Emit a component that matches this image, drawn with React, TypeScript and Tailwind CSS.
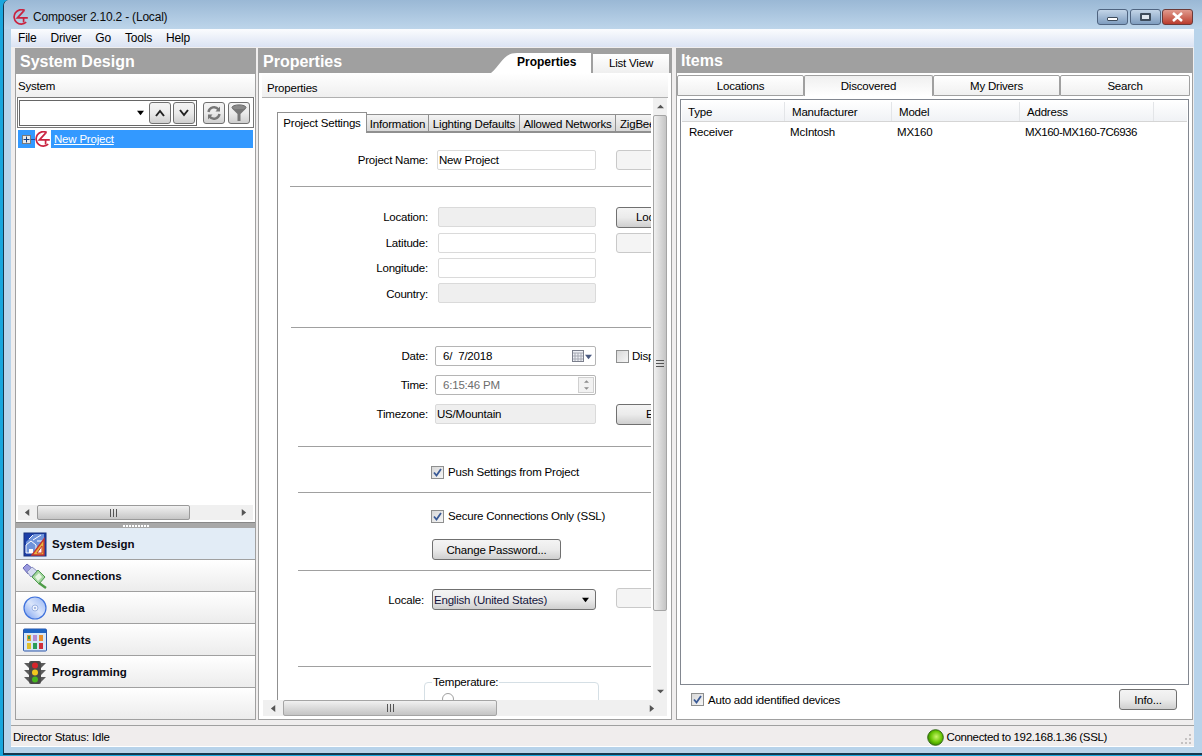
import React from "react";

const Logo = ({ s = 16 }: { s?: number }) => (
  <svg width={s} height={s} viewBox="0 0 16 16" fill="none" stroke="#c9233f" strokeWidth="1.7">
    <path d="M11.8 1.6 A7.2 7.2 0 1 0 13.2 13.2" />
    <path d="M10.6 2.2 L4.4 8.8 H14.8 M10.6 2.2 V3 M10.6 8.8 V13.6" />
  </svg>
);

const SysIcon = () => (
  <svg width="24" height="26" viewBox="0 0 24 26">
    <rect x="1" y="2" width="22" height="23" fill="#1c3fa8" stroke="#17307c" />
    <path d="M3 11 L11 3 H21 V8 L10 22 H3 Z" fill="#6f93da" />
    <path d="M3 14 L8 10 L13 14 V22 H3 Z" fill="none" stroke="#fff" />
    <path d="M6 18 H10 V22 H6 Z" fill="#fff" />
    <path d="M6 8 L10 4 M10 9 L18 4 M14 10 H20" stroke="#fff" />
    <path d="M21 8 V24 H9 Z" fill="#e9b23e" stroke="#c6352d" strokeWidth="1.4" />
    <path d="M19 15 V22 H14 Z" fill="#fff" stroke="#c6352d" />
  </svg>
);
const ConnIcon = () => (
  <svg width="26" height="26" viewBox="0 0 26 26">
    <path d="M1 5 L5 1 L11 6 L6 11 Z" fill="#9a9adf" stroke="#6767b4" />
    <path d="M5 9 L10 4 L15 8 L9 14 Z" fill="#d6dcf2" stroke="#8d92bf" />
    <path d="M10 14 L16 7 L23 14 L17 21 Z" fill="#a5d6a0" stroke="#4d9a4f" />
    <path d="M13 14 L17 10 L20 14 L16 18 Z" fill="#e7f5e4" />
    <path d="M17 20 L24 25" stroke="#4e9c48" strokeWidth="2.4" fill="none" />
  </svg>
);
const CdIcon = () => (
  <svg width="24" height="24" viewBox="0 0 24 24">
    <defs>
      <linearGradient id="cd" x1="0" y1="1" x2="1" y2="0">
        <stop offset="0" stopColor="#6f98f0" />
        <stop offset="0.5" stopColor="#dbe6fb" />
        <stop offset="1" stopColor="#93b3f3" />
      </linearGradient>
    </defs>
    <circle cx="12" cy="12" r="11" fill="url(#cd)" stroke="#3f72dc" strokeWidth="1.2" />
    <circle cx="12" cy="12" r="3" fill="#eef3fd" stroke="#9db4e2" />
    <circle cx="12" cy="12" r="1" fill="#8fa6d8" />
  </svg>
);
const AgentsIcon = () => (
  <svg width="24" height="24" viewBox="0 0 24 24">
    <rect x="0.5" y="1" width="23" height="22" rx="1" fill="#d7e6f7" stroke="#2a55a8" />
    <rect x="1" y="1" width="22" height="4" fill="#1f63c2" />
    <rect x="4" y="7" width="4" height="6" fill="#e3a12f" />
    <rect x="5" y="8" width="2" height="3" fill="#3d9c4a" />
    <rect x="10" y="7" width="4" height="6" fill="#b78ad0" />
    <rect x="16" y="7" width="4" height="6" fill="#e8902e" />
    <rect x="4" y="15" width="4" height="6" fill="#e0c02e" />
    <rect x="10" y="15" width="4" height="6" fill="#2b9b58" />
    <rect x="16" y="15" width="4" height="6" fill="#cf2e3b" />
  </svg>
);
const LightIcon = () => (
  <svg width="24" height="24" viewBox="0 0 24 24">
    <path d="M1 3 H6 V8 Z M23 3 H18 V8 Z M1 10 H6 V15 Z M23 10 H18 V15 Z M1 17 H6 V22 Z M23 17 H18 V22 Z" fill="#5c5c5c" />
    <rect x="6" y="1" width="12" height="23" rx="2" fill="#4a4a4a" />
    <circle cx="12" cy="5.5" r="3" fill="#d6262c" />
    <circle cx="12" cy="12.5" r="3" fill="#f3c71f" />
    <circle cx="12" cy="19.5" r="3" fill="#46b51f" />
  </svg>
);

const Grip = () => (
  <svg width="7" height="8" viewBox="0 0 7 8" stroke="#555">
    <path d="M0.5 0V8M3.5 0V8M6.5 0V8" />
  </svg>
);

const btn = "rounded-[3px] border border-[#707070] bg-gradient-to-b from-[#f4f4f4] via-[#ebebeb] to-[#cfcfcf] text-black";

const Sep = ({ mt, ml }: { mt: string; ml: string }) => (
  <div className={`h-px w-[420px] shrink-0 bg-[#a0a0a0] ${mt} ${ml}`} />
);

const DisabledBtn = () => (
  <div className="ml-5 h-5 w-[60px] shrink-0 rounded-[3px] border border-[#c9c9c9] bg-[#f4f4f4]" />
);

const Field = ({ children, gray, w = "w-[158px]" }: { children?: React.ReactNode; gray?: boolean; w?: string }) => (
  <div className={`flex h-5 shrink-0 items-center rounded-[2px] border border-[#dadada] px-[1px] ${w} ${gray ? "bg-[#efefef]" : "bg-white"}`}>
    {children}
  </div>
);

const Label = ({ children }: { children: React.ReactNode }) => (
  <div className="w-[150px] shrink-0 text-right">{children}</div>
);

const Check = ({ className = "" }: { className?: string }) => (
  <div className={`flex h-[13px] w-[13px] shrink-0 items-center justify-center border border-[#8e8f8f] bg-gradient-to-br from-[#d8d8d8] to-[#f6f6f6] ${className}`}>
    <svg width="11" height="11" viewBox="0 0 11 11" fill="none" stroke="#3a5a96" strokeWidth="1.8">
      <path d="M2 5.5 L4.5 8.5 L9 2" />
    </svg>
  </div>
);

const Arrow = ({ d, cls = "fill-[#555]", w = 7, h = 7 }: { d: string; cls?: string; w?: number; h?: number }) => (
  <svg width={w} height={h} viewBox="0 0 8 8" className={cls}>
    <path d={d} />
  </svg>
);

const nav = [
  { name: "System Design", icon: <SysIcon />, active: true },
  { name: "Connections", icon: <ConnIcon /> },
  { name: "Media", icon: <CdIcon /> },
  { name: "Agents", icon: <AgentsIcon /> },
  { name: "Programming", icon: <LightIcon /> },
];

const topTabs = [
  { name: "Project Settings", active: true, w: "w-[90px] justify-center" },
  { name: "Information", w: "w-[63px] justify-center" },
  { name: "Lighting Defaults", w: "w-[92px] justify-center" },
  { name: "Allowed Networks", w: "w-[97px] justify-center" },
  { name: "ZigBee", w: "w-[60px] justify-start pl-[4px]" },
];

const columns = [
  { name: "Type", w: "w-[103px]", pl: "pl-[6px]" },
  { name: "Manufacturer", w: "w-[107px]", pl: "pl-[7px]" },
  { name: "Model", w: "w-[128px]", pl: "pl-[7px]" },
  { name: "Address", w: "w-[134px]", pl: "pl-[7px]" },
];

const itemTabs = [
  { name: "Locations", w: "w-[127px]" },
  { name: "Discovered", w: "w-[129px]", active: true },
  { name: "My Drivers", w: "w-[127px]" },
  { name: "Search", w: "w-[130px]" },
];

export default function App() {
  return (
    <div className="h-[756px] w-[1202px] overflow-hidden bg-[#19a6dd] pl-[3px] text-[11.5px] leading-[14px] tracking-[-0.2px] text-black [font-family:'Liberation_Sans',Arial,sans-serif]">
      <div className="flex h-[755px] flex-col rounded-tl-[6px] border-b-2 border-l border-[#16384f] bg-[#b8d3ea]">
        {/* Title bar */}
        <div className="flex h-[29px] shrink-0 items-start justify-between rounded-tl-[6px] bg-gradient-to-b from-[#9ab8d5] to-[#bdd5ea] pl-[9px] pr-[9px]">
          <div className="mt-[9px] flex items-center gap-[4px]">
            <Logo />
            <span className="text-[12px] text-[#0c0c0c]">Composer 2.10.2 - (Local)</span>
          </div>
          <div className="mt-[9px] flex">
            <div className="flex h-4 w-[31px] items-center justify-center rounded-[3px] border border-[#4f6480] bg-gradient-to-b from-[#c3d5e8] to-[#7f9dbf]">
              <div className="mt-[4px] h-[4px] w-[11px] rounded-[1px] border border-[#3e4c5c] bg-white" />
            </div>
            <div className="ml-[2px] flex h-4 w-[31px] items-center justify-center rounded-[3px] border border-[#4f6480] bg-gradient-to-b from-[#c3d5e8] to-[#7f9dbf]">
              <div className="h-[8px] w-[11px] rounded-[1px] border-2 border-[#3e4c5c] bg-[#dfe7f0]" />
            </div>
            <div className="ml-px flex h-4 w-[31px] items-center justify-center rounded-[3px] border border-[#6b3a38] bg-gradient-to-b from-[#e09a8e] to-[#b93a2c]">
              <svg width="13" height="10" viewBox="0 0 13 10" stroke="#fff" strokeWidth="2.6">
                <path d="M2 1 L11 9 M11 1 L2 9" />
              </svg>
            </div>
          </div>
        </div>

        {/* Client */}
        <div className="ml-[7px] mr-[8px] flex flex-1 flex-col bg-white">
          <div className="flex h-[18px] shrink-0 items-center gap-[14px] bg-gradient-to-b from-[#fbfcfe] to-[#dbe3f3] pl-[7px] text-[12px]">
            <span>File</span>
            <span>Driver</span>
            <span>Go</span>
            <span>Tools</span>
            <span>Help</span>
          </div>

          <div className="flex h-[678px] shrink-0 bg-[#f0eeee] pl-[4px] pt-px">
            {/* Left */}
            <div className="flex h-[672px] w-[241px] shrink-0 flex-col border-x border-b border-[#a0a0a0] bg-white">
              <div className="flex h-[26px] shrink-0 items-center bg-[#a0a0a0] pl-1 pt-[2px] text-[16px] font-bold tracking-normal text-white">System Design</div>
              <div className="flex h-[23px] shrink-0 items-center bg-gradient-to-b from-white to-[#efefef] pl-[2px]">System</div>

              <div className="mx-px flex h-[31px] shrink-0 items-center border border-[#777] bg-white pl-[1px]">
                <div className="flex h-[26px] w-[178px] items-center border border-[#666]">
                  <div className="flex flex-1 justify-end pr-[5px]">
                    <Arrow d="M0 2 H8 L4 7 Z" cls="fill-black" />
                  </div>
                  <div className={`flex h-[22px] w-[22px] items-center justify-center ${btn}`}>
                    <svg width="12" height="8" viewBox="0 0 12 8" fill="none" stroke="#222" strokeWidth="2"><path d="M2 7 L6 2 L10 7" /></svg>
                  </div>
                  <div className={`ml-[2px] mr-[1px] flex h-[22px] w-[22px] items-center justify-center ${btn}`}>
                    <svg width="12" height="8" viewBox="0 0 12 8" fill="none" stroke="#222" strokeWidth="2"><path d="M2 1 L6 6 L10 1" /></svg>
                  </div>
                </div>
                <div className={`ml-[6px] flex h-[22px] w-[22px] items-center justify-center ${btn}`}>
                  <svg width="16" height="16" viewBox="0 0 16 16" fill="none" stroke="#777" strokeWidth="2.4">
                    <path d="M2.5 7 A5.6 5.6 0 0 1 12.5 4.5 M13.5 9 A5.6 5.6 0 0 1 3.5 11.5" />
                    <path d="M14 1.5 V6.5 H9.5 Z M2 14.5 V9.5 H6.5 Z" fill="#777" stroke="none" />
                  </svg>
                </div>
                <div className={`ml-[3px] flex h-[22px] w-[22px] items-center justify-center ${btn}`}>
                  <svg width="16" height="18" viewBox="0 0 16 18">
                    <ellipse cx="8" cy="3.5" rx="7" ry="2.6" fill="#8a8a8a" stroke="#666" />
                    <path d="M1.5 5 L6.5 10 V17 H9.5 V10 L14.5 5 Z" fill="#777" />
                  </svg>
                </div>
              </div>

              <div className="mx-[2px] mt-[2px] flex h-[18px] shrink-0 items-center bg-[#3399ff] pl-1">
                <div className="flex h-[9px] w-[9px] items-center justify-center border border-[#7a7a7a] bg-[#e8e8e8]">
                  <svg width="7" height="7" viewBox="0 0 7 7" stroke="#123a7a"><path d="M0.5 3.5 H6.5 M3.5 0.5 V6.5" /></svg>
                </div>
                <div className="h-px w-[4px] bg-[#1d4fa0]" />
                <div className="flex h-[18px] w-4 items-center justify-center bg-white"><Logo s={16} /></div>
                <span className="ml-[3px] text-white underline">New Project</span>
              </div>

              <div className="flex-1" />

              <div className="mx-[2px] mb-[2px] flex h-[15px] shrink-0 items-center bg-[#f0f0f0]">
                <div className="flex w-[19px] justify-center"><Arrow d="M6 0 V8 L1 4 Z" /></div>
                <div className="flex h-[15px] w-[153px] items-center justify-center rounded-[2px] border border-[#9a9a9a] bg-gradient-to-b from-[#f1f1f1] to-[#c6c6c6]"><Grip /></div>
                <div className="flex flex-1 justify-end pr-[6px]"><Arrow d="M2 0 V8 L7 4 Z" /></div>
              </div>

              <div className="flex h-[6px] shrink-0 items-center justify-center border-t border-[#888] bg-[#a8a8a8]">
                <div className="flex gap-px">
                  {Array.from({ length: 9 }).map((_, i) => (
                    <div key={i} className="h-[2px] w-[2px] bg-white" />
                  ))}
                </div>
              </div>

              {nav.map((n) => (
                <div
                  key={n.name}
                  className={`flex h-8 shrink-0 items-center border-b border-[#a0a0a0] pl-[6px] font-bold ${n.active ? "bg-[#e2ecf6]" : "bg-gradient-to-b from-white to-[#ececec]"}`}
                >
                  <div className="flex w-[26px] justify-center">{n.icon}</div>
                  <span className="ml-[4px] text-[11.5px] tracking-normal text-[#0a0a14]">{n.name}</span>
                </div>
              ))}
              <div className="h-[31px] flex-none bg-gradient-to-b from-white to-[#ececec]" />
            </div>

            {/* Center */}
            <div className="ml-[2px] flex h-[672px] w-[414px] shrink-0 flex-col border-x border-b border-[#a0a0a0] bg-white">
              <div className="flex h-[25px] shrink-0 items-end justify-between bg-[#a0a0a0] pl-1 pr-[1px]">
                <span className="mb-[4px] text-[16px] font-bold tracking-normal text-white">Properties</span>
                <div className="flex items-end">
                  <svg width="26" height="20" viewBox="0 0 26 20" className="fill-white"><path d="M0 20 C10 12 12 0 26 0 V20 Z" /></svg>
                  <div className="flex h-5 w-[74px] items-center bg-white pb-[2px] text-[12px] font-bold tracking-normal">Properties</div>
                  <div className="ml-[1px] flex h-5 w-[78px] items-center justify-center rounded-tr-[2px] border border-b-0 border-[#a0a0a0] bg-gradient-to-b from-white to-[#efefef] pb-[2px]">List View</div>
                </div>
              </div>
              <div className="mx-[3px] flex h-[25px] shrink-0 items-center border-b border-[#b0b0b0] bg-gradient-to-b from-white to-[#efefef] pl-[5px] pt-[5px]">Properties</div>

              <div className="flex min-h-0 flex-1 flex-col pb-[3px] pl-1 pr-[4px]">
                <div className="flex min-h-0 flex-1">
                  <div className="min-w-0 flex-1 overflow-hidden bg-white">
                    <div className="flex h-full w-[600px] flex-col pl-[14px] pt-[14px]">
                      <div className="flex h-5 shrink-0 items-end">
                        {topTabs.map((t) => (
                          <div
                            key={t.name}
                            className={`flex shrink-0 items-center border border-[#909090] ${t.w} ${t.active ? "relative z-10 -mb-px h-[21px] border-b-0 bg-white" : "-ml-px h-[18px] overflow-hidden whitespace-nowrap bg-gradient-to-b from-[#f4f4f4] to-[#d8d8d8] pt-px"}`}
                          >
                            {t.name}
                          </div>
                        ))}
                      </div>

                      <div className="flex min-h-0 flex-1 flex-col border-l border-t border-[#909090]">
                        <div className="mt-[17px] flex h-5 shrink-0 items-center">
                          <Label>Project Name:</Label>
                          <div className="ml-[9px]"><Field w="w-[159px]">New Project</Field></div>
                          <DisabledBtn />
                        </div>
                        <Sep mt="mt-[16px]" ml="ml-[12px]" />
                        <div className="mt-[20px] flex h-5 shrink-0 items-center">
                          <Label>Location:</Label>
                          <div className="ml-[10px]"><Field gray /></div>
                          <div className={`ml-5 flex h-[21px] w-[60px] shrink-0 items-center justify-start whitespace-nowrap pl-[19px] ${btn}`}>Loc</div>
                        </div>
                        <div className="mt-[6px] flex h-5 shrink-0 items-center">
                          <Label>Latitude:</Label>
                          <div className="ml-[10px]"><Field /></div>
                          <DisabledBtn />
                        </div>
                        <div className="mt-[5px] flex h-5 shrink-0 items-center">
                          <Label>Longitude:</Label>
                          <div className="ml-[10px]"><Field /></div>
                        </div>
                        <div className="mt-[5px] flex h-5 shrink-0 items-center">
                          <div className="w-[150px] shrink-0 pt-[2px] text-right">Country:</div>
                          <div className="ml-[10px]"><Field gray /></div>
                        </div>
                        <Sep mt="mt-[24px]" ml="ml-[13px]" />
                        <div className="mt-[18px] flex h-5 shrink-0 items-center">
                          <Label>Date:</Label>
                          <div className="ml-[7px] flex h-5 w-[161px] shrink-0 items-center justify-between rounded-[2px] border border-[#b5b5b5] bg-white pl-[7px] pr-[3px]">
                            <span>6/&nbsp; 7/2018</span>
                            <div className="flex items-center gap-px">
                              <svg width="12" height="12" viewBox="0 0 12 12">
                                <rect x="0.5" y="0.5" width="11" height="11" fill="#eef0f5" stroke="#7b7f8c" />
                                <path d="M3 3V11M6 3V11M9 3V11M1 3H11M1 6H11M1 9H11" stroke="#a6a9b3" />
                              </svg>
                              <Arrow d="M0 2 H8 L4 7 Z" cls="fill-[#4a5a80]" />
                            </div>
                          </div>
                          <div className="ml-5 flex shrink-0 items-center gap-[3px]">
                            <div className="h-[13px] w-[13px] border border-[#8e8f8f] bg-gradient-to-br from-[#d8d8d8] to-[#f6f6f6]" />
                            <span>Disp</span>
                          </div>
                        </div>
                        <div className="mt-[9px] flex h-5 shrink-0 items-center">
                          <Label>Time:</Label>
                          <div className="ml-[7px] flex h-5 w-[161px] shrink-0 items-center justify-between rounded-[2px] border border-[#b5b5b5] bg-white pl-[7px] pr-px text-[#6d6d6d]">
                            <span>6:15:46 PM</span>
                            <div className="flex h-4 w-[16px] flex-col items-center justify-around border border-[#d0d0d0] bg-[#f2f2f2]">
                              <Arrow d="M0 6 H8 L4 2 Z" cls="fill-[#8c8c8c]" w={7} h={5} />
                              <Arrow d="M0 2 H8 L4 6 Z" cls="fill-[#8c8c8c]" w={7} h={5} />
                            </div>
                          </div>
                        </div>
                        <div className="mt-[9px] flex h-5 shrink-0 items-center">
                          <Label>Timezone:</Label>
                          <div className="ml-[7px] flex h-5 w-[161px] shrink-0 items-center rounded-[2px] border border-[#dadada] bg-[#efefef] px-[1px]">US/Mountain</div>
                          <div className={`ml-5 flex h-[21px] w-[60px] shrink-0 items-center justify-start pl-[29px] ${btn}`}>E</div>
                        </div>
                        <Sep mt="mt-[22px]" ml="ml-[20px]" />
                        <div className="mt-[18px] flex h-[14px] shrink-0 items-center pl-[153px]">
                          <Check />
                          <span className="ml-[4px]">Push Settings from Project</span>
                        </div>
                        <Sep mt="mt-[13px]" ml="ml-[20px]" />
                        <div className="mt-[16px] flex h-[14px] shrink-0 items-center pl-[153px]">
                          <Check />
                          <span className="ml-[4px]">Secure Connections Only (SSL)</span>
                        </div>
                        <div className="mt-[16px] flex h-[21px] shrink-0 pl-[154px]">
                          <div className={`flex w-[129px] items-center justify-center ${btn}`}>Change Password...</div>
                        </div>
                        <Sep mt="mt-[10px]" ml="ml-[20px]" />
                        <div className="mt-[18px] flex h-[21px] shrink-0 items-center">
                          <div className="w-[146px] shrink-0 text-right">Locale:</div>
                          <div className={`ml-[8px] flex h-[21px] w-[164px] shrink-0 items-center justify-between pl-[1px] pr-[6px] ${btn}`}>
                            <span className="text-[#14143c]">English (United States)</span>
                            <Arrow d="M0 2 H8 L4 7 Z" cls="fill-black" />
                          </div>
                          <div className="-mt-[3px] ml-5 h-5 w-[60px] shrink-0 rounded-[3px] border border-[#c9c9c9] bg-[#f4f4f4]" />
                        </div>
                        <Sep mt="mt-[56px]" ml="ml-[20px]" />
                        <fieldset className="ml-[146px] mt-[8px] h-[60px] w-[175px] shrink-0 rounded-[4px] border border-[#d5dfe5] pl-[7px]">
                          <legend className="px-px">Temperature:</legend>
                          <div className="ml-[10px] mt-[4px] h-3 w-3 rounded-full border border-[#a0a0a0]" />
                        </fieldset>
                      </div>
                    </div>
                  </div>

                  <div className="ml-[2px] flex w-[14px] shrink-0 flex-col items-center bg-[#f0f0f0]">
                    <div className="flex h-[17px] items-center justify-center"><Arrow d="M0 6 H8 L4 2 Z" cls="fill-[#555]" /></div>
                    <div className="flex h-[496px] w-full items-center justify-center rounded-[2px] border border-[#a5a5a5] bg-gradient-to-r from-[#f1f1f1] to-[#c4c4c4]">
                      <svg width="8" height="7" viewBox="0 0 8 7" stroke="#555"><path d="M0 0.5H8M0 3.5H8M0 6.5H8" /></svg>
                    </div>
                    <div className="flex-1" />
                    <div className="flex h-[17px] items-center justify-center"><Arrow d="M0 2 H8 L4 6 Z" cls="fill-[#555]" /></div>
                  </div>
                </div>

                <div className="flex h-4 shrink-0 items-center bg-[#f0f0f0]">
                  <div className="flex w-5 justify-center"><Arrow d="M6 0 V8 L1 4 Z" /></div>
                  <div className="flex h-4 w-[214px] items-center justify-center rounded-[2px] border border-[#a5a5a5] bg-gradient-to-b from-[#f1f1f1] to-[#c4c4c4]"><Grip /></div>
                  <div className="flex-1" />
                  <div className="flex w-[20px] justify-center pr-[3px]"><Arrow d="M2 0 V8 L7 4 Z" /></div>
                  <div className="w-[4px]" />
                </div>
              </div>
            </div>

            {/* Right */}
            <div className="ml-1 flex h-[672px] w-[517px] shrink-0 flex-col border-x border-b border-[#a0a0a0] bg-white">
              <div className="flex h-[25px] shrink-0 items-center bg-[#a0a0a0] pl-1 pt-[1px] text-[16px] font-bold tracking-normal text-white">Items</div>
              <div className="mt-[2px] flex h-[21px] shrink-0">
                {itemTabs.map((t) => (
                  <div
                    key={t.name}
                    className={`flex shrink-0 items-center justify-center rounded-t-[2px] border border-[#a0a0a0] ${t.w} ${t.active ? "border-b-0 bg-gradient-to-b from-[#f0f0f0] to-white" : "bg-gradient-to-b from-white to-[#f0f0f0]"}`}
                  >
                    {t.name}
                  </div>
                ))}
              </div>

              <div className="mx-[3px] mt-[3px] flex h-[586px] shrink-0 flex-col border border-[#828790]">
                <div className="mx-px mt-px flex h-[21px] shrink-0 border-b border-[#d5d5d5] bg-gradient-to-b from-white to-[#f0f2f5] pt-px">
                  {columns.map((c) => (
                    <div key={c.name} className={`flex shrink-0 items-center border-r border-[#e3e5e8] ${c.w} ${c.pl}`}>{c.name}</div>
                  ))}
                </div>
                <div className="mt-[2px] flex h-4 items-center">
                  <div className="w-[104px] shrink-0 pl-2">Receiver</div>
                  <div className="w-[107px] shrink-0 pl-[5px]">McIntosh</div>
                  <div className="w-[128px] shrink-0 pl-[5px]">MX160</div>
                  <div className="shrink-0 pl-[5px] tracking-[-0.5px]">MX160-MX160-7C6936</div>
                </div>
              </div>

              <div className="mt-1 flex h-[21px] shrink-0 items-center justify-between pl-[14px] pr-[15px]">
                <div className="flex items-center gap-[4px]">
                  <Check />
                  <span>Auto add identified devices</span>
                </div>
                <div className={`flex h-[21px] w-[58px] items-center justify-center ${btn}`}>Info...</div>
              </div>
            </div>
          </div>

          {/* Status */}
          <div className="flex h-[21px] shrink-0 items-center justify-between border-t border-[#a0a0a0] bg-[#f0eded] pl-[2px] pr-[2px] pt-[2px]">
            <span>Director Status: Idle</span>
            <div className="flex items-center">
              <svg width="17" height="17" viewBox="0 0 17 17">
                <defs>
                  <radialGradient id="led" cx="0.55" cy="0.45" r="0.6">
                    <stop offset="0" stopColor="#c9f56a" />
                    <stop offset="0.6" stopColor="#66c403" />
                    <stop offset="1" stopColor="#2f7a00" />
                  </radialGradient>
                </defs>
                <circle cx="8.5" cy="8.5" r="7.8" fill="url(#led)" stroke="#336b12" />
              </svg>
              <span className="ml-[3px] tracking-[-0.35px]">Connected to 192.168.1.36 (SSL)</span>
              <svg width="12" height="12" viewBox="0 0 12 12" className="ml-[73px] mt-[4px] fill-[#c5c2c2]">
                <rect x="9" y="1" width="2" height="2" />
                <rect x="5" y="5" width="2" height="2" />
                <rect x="9" y="5" width="2" height="2" />
                <rect x="1" y="9" width="2" height="2" />
                <rect x="5" y="9" width="2" height="2" />
                <rect x="9" y="9" width="2" height="2" />
              </svg>
            </div>
          </div>
        </div>
        <div className="h-[6px] shrink-0" />
      </div>
    </div>
  );
}
